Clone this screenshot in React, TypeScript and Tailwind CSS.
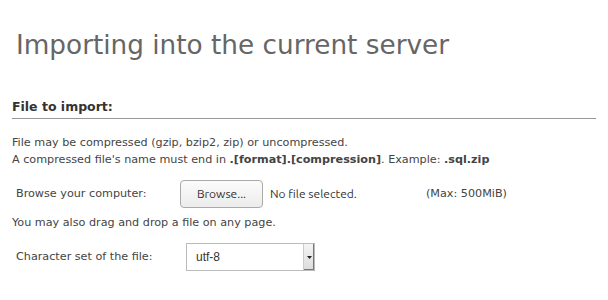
export default function App() {
  return (
    <div className="w-[608px] h-[300px] bg-white overflow-hidden font-['DejaVu_Sans',sans-serif] text-[#444]">
      <h2 className="pl-[16px] pt-[28px] text-[26.3px] leading-[34px] font-normal text-[#666]">
        Importing into the current server
      </h2>

      <div className="mt-[36px] px-[12px]">
        <h3 className="text-[12.5px] leading-[18px] font-bold text-[#333] border-b border-[#999] pb-[2px]">
          File to import:
        </h3>

        <div className="mt-[15px] text-[11.2px] leading-[17px] text-[#444]">
          <p>File may be compressed (gzip, bzip2, zip) or uncompressed.</p>
          <p>
            A compressed file's name must end in <b>.[format].[compression]</b>. Example: <b>.sql.zip</b>
          </p>
        </div>

        <div className="mt-[12px] flex items-center pl-[4px] text-[11.2px]">
          <span className="w-[164px]">Browse your computer:</span>
          <button className="h-[28px] w-[83px] rounded-[4px] border border-[#aaa] bg-gradient-to-b from-[#fbfbfb] to-[#ececec] font-['Ubuntu','Liberation_Sans',sans-serif] text-[12px] text-[#333]">
            Browse...
          </button>
          <span className="ml-[7px] w-[156px] font-['Ubuntu','Liberation_Sans',sans-serif] text-[12px] text-[#333]">No file selected.</span>
          <span>(Max: 500MiB)</span>
        </div>

        <p className="mt-[6px] text-[11.2px] leading-[17px]">You may also drag and drop a file on any page.</p>

        <div className="mt-[12px] flex items-center pl-[4px] text-[11.2px]">
          <span className="w-[170px]">Character set of the file:</span>
          <div className="flex h-[28px] w-[129px] items-stretch border border-[#bbb] bg-white">
            <span className="flex-1 pl-[9px] flex items-center font-['Liberation_Sans',sans-serif] text-[12px] text-[#333]">utf-8</span>
            <span className="w-[11px] flex items-center justify-center bg-gradient-to-b from-[#f4f4f4] to-[#dcdcdc] border-l border-[#ccc] shadow-[inset_-1px_-1px_0_#777]">
              <svg width="5" height="3" viewBox="0 0 5 3"><path d="M0 0h5L2.5 3z" fill="#222" /></svg>
            </span>
          </div>
        </div>
      </div>
    </div>
  );
}
